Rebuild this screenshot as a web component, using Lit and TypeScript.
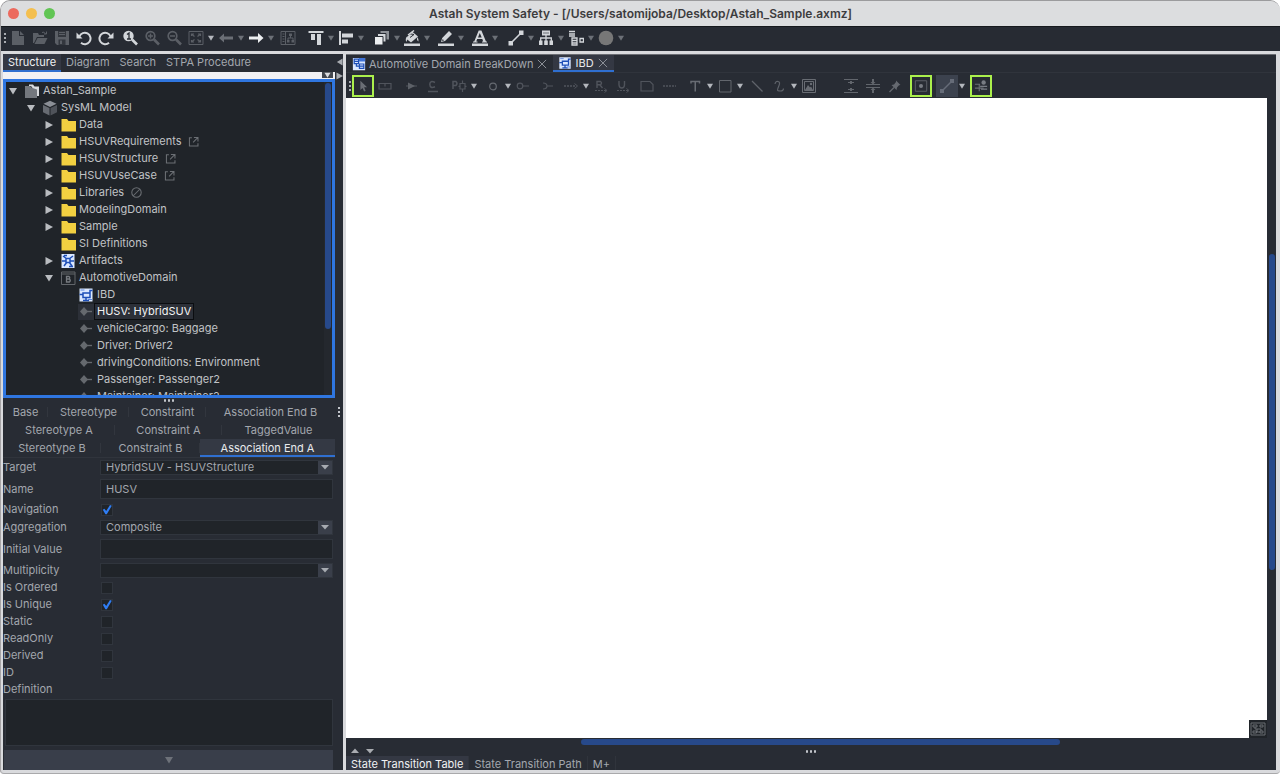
import { LitElement, html, css, svg, nothing, TemplateResult } from "lit";
import { customElement, property } from "lit/decorators.js";
import { classMap } from "lit/directives/class-map.js";

const L = "#d3d6da";
const D = "#5b5f66";
const G = "#50545c";

const art: Record<string, TemplateResult> = {
  file: svg`<path d="M2 1h7v5h5v9H2z" fill=${D}/><path d="M10 1l4 4h-4z" fill=${D}/>`,
  open: svg`<path d="M1 13V3h5l1 2h5v2H5l-3 6z" fill=${D}/><path d="M5.500 8H15.500l-3 6H2.500z" fill=${D}/><path d="M10 2.500q2-1.500 3.500 1.500M12 4h2.500V1.500" fill="none" stroke=${D}/>`,
  save: svg`<path d="M1 1h14v14H3l-2-2z" fill=${D}/><path d="M4 1h8v6H4z" fill="#33373e"/><path d="M5 2.500h6M5 4.500h6" stroke=${D}/><path d="M4.500 9.500h7v5.500h-7z" fill="#33373e"/><path d="M6 10.500h2v3.500H6z" fill=${D}/>`,
  undo: svg`<path d="M3.500 6.500A5.700 5.700 0 1 1 5 12.700" fill="none" stroke=${L} stroke-width="2"/><path d="M0.500 2.500v6h6z" fill=${L}/>`,
  redo: svg`<path d="M12.500 6.500A5.700 5.700 0 1 0 11 12.700" fill="none" stroke=${L} stroke-width="2"/><path d="M15.500 2.500v6h-6z" fill=${L}/>`,
  zoom1: svg`<circle cx="6.500" cy="6" r="5.200" fill=${L}/><path d="M10 9.500l5 5" stroke=${L} stroke-width="2.600"/><path d="M5 4.500l2-1.500v6M5 9h4" fill="none" stroke="#282c34" stroke-width="1.300"/>`,
  zoomIn: svg`<circle cx="6.500" cy="6" r="4.300" fill="none" stroke=${D} stroke-width="1.700"/><path d="M10 9.500l5 5" stroke=${D} stroke-width="2.600"/><path d="M4 6h5M6.500 3.500v5" stroke=${D} stroke-width="1.500"/>`,
  zoomOut: svg`<circle cx="6.500" cy="6" r="4.300" fill="none" stroke=${D} stroke-width="1.700"/><path d="M10 9.500l5 5" stroke=${D} stroke-width="2.600"/><path d="M4 6h5" stroke=${D} stroke-width="1.500"/>`,
  fit: svg`<path d="M1 1.500h14v13H1z" fill="none" stroke=${D}/><path d="M3.500 6V4H6M10 4h2.500v2M12.500 10v2H10M6 12H3.500v-2M4 4.500l2.500 2M12 4.500l-2.500 2M4 11.500l2.500-2M12 11.500l-2.500-2" fill="none" stroke=${D} stroke-width="1.200"/>`,
  left: svg`<path d="M1 8l5-4.500v3h9v3H6v3z" fill="#6a6e75"/>`,
  right: svg`<path d="M15.500 8l-5.500-5v3.500H1v3h9V13z" fill="#eceef0"/>`,
  table: svg`<path d="M1 1.500h14v13H1zM5.500 1.500v13" fill="none" stroke=${D}/><path d="M2.500 4h2M2.500 6.500h2M2.500 9h2M2.500 11.500h2" stroke=${D}/><path d="M9 3.500h3v2.500H9zM7 10h2.500v2.500H7zM11.500 10H14v2.500h-2.500z" fill=${D}/><path d="M10.500 6v2M8 10V8h5v2" fill="none" stroke=${D}/>`,
  alignTop: svg`<path d="M0.500 1h15v2h-15zM3 4h4v6H3zM9 4h4v11H9z" fill=${L}/>`,
  alignLeft: svg`<path d="M1 1h2v14H1zM4 3.500h11v4H4zM4 9.500h6v4H4z" fill=${L}/>`,
  layers: svg`<path d="M6.500 1H15v8.500H6.500z" fill="#8d9197"/><path d="M3.500 3.500H12V12H3.500z" fill=${L} stroke="#282c34"/><path d="M0.500 6.500H9V15H0.500z" fill="#eceef0" stroke="#282c34"/>`,
  bucket: svg`<path d="M0 13.500h16V16H0z" fill=${L}/><path d="M8 1.500l6 5-7 6-5-4z" fill=${L}/><path d="M4 3.500l6 1M6 7.500l4-3" stroke="#282c34"/><path d="M4 5l6-4.500" stroke=${L} stroke-width="1.400"/><path d="M3.500 6Q0.500 9 2.500 12 4 9.500 3.500 6z" fill=${L}/><path d="M13 7q2 2 1.500 4.500-2-1-1.500-4.500z" fill=${L}/>`,
  pencil: svg`<path d="M0 13.500h16V16H0z" fill=${L}/><path d="M3 12l1.200-4L11 1l3 3-7 7zM4 11l2-.5-1.300-1.500z" fill=${L} fill-rule="evenodd"/>`,
  letter: svg`<path d="M0 13.500h16V16H0z" fill=${L}/><path d="M6.700 0.500h2.700L14 11.500h1v1h-5v-1h1.200L10.300 9H5.200l-1 2.500h1.300v1H1v-1h1.200zM7.800 3L6 7.500h3.700z" fill=${L} fill-rule="evenodd"/>`,
  line: svg`<path d="M2.500 13.500l11-11" stroke=${L} stroke-width="1.600"/><path d="M0.500 11H5v4.500H.5zM11 .5h4.500V5H11z" fill=${L}/>`,
  hier: svg`<path d="M4 0.500h8v5H4zM1 10.500h3.500V15H1zM6.200 10.500h3.600V15H6.200zM11.500 10.500H15V15h-3.500z" fill=${L}/><path d="M8 5v6M2.700 11V8h10.600v3" fill="none" stroke=${L} stroke-width="1.300"/><path d="M5 3h6" stroke="#6a6e75"/>`,
  boxes: svg`<path d="M1 1.500h6M1 4h6M1 6h6M4 8h5v7H4zM4 10.500h5M4 13h5M12 8.500h3.500V12H12z" fill="none" stroke=${L} stroke-width="1.300"/>`,
  ball: svg`<circle cx="8" cy="8" r="7.300" fill="#777"/>`,

  cursor: svg`<path d="M5 2v10.500l2.500-2.300 1.700 4 1.800-.8-1.700-3.900h3.400z" fill="#6a6e75"/>`,
  part: svg`<path d="M2 5.500h12V11H2zM8 5.500v3" fill="none" stroke=${G} stroke-width="1.200"/>`,
  flow: svg`<path d="M3 8h11" stroke=${G}/><path d="M5 4.500L12 8l-7 3.500z" fill="#5d6168"/>`,
  constraint: svg`<path d="M3 13.500h10" stroke=${G} stroke-width="1.500"/><path d="M10 4.500Q5 2 4.800 6.300 5 11 10 8.800" fill="none" stroke=${G} stroke-width="1.500"/>`,
  port: svg`<path d="M2 11V3.500h3q2 2-0 4H2" fill="none" stroke=${G} stroke-width="1.500"/><path d="M9 5.500h5V11H9zM11.500 2.500v3M11.500 11v3M7.500 8.300h1.500M14 8.300h1.500" fill="none" stroke=${G} stroke-width="1.200"/>`,
  ring: svg`<circle cx="8" cy="8.500" r="3.300" fill="none" stroke="#656970" stroke-width="1.200"/>`,
  provided: svg`<circle cx="5" cy="8" r="2.800" fill="none" stroke=${G} stroke-width="1.200"/><path d="M8 8h6" stroke=${G} stroke-width="1.200"/>`,
  required: svg`<path d="M4 5q4 0 4 3t-4 3M8 8h6" fill="none" stroke=${G} stroke-width="1.200"/>`,
  dashed: svg`<path d="M1 8h12" stroke=${G} stroke-width="1.300" stroke-dasharray="2 1"/><path d="M11.500 5.500L14.500 8l-3 2.500" fill="none" stroke=${G}/>`,
  realize: svg`<path d="M4 10V3.500h3.500q2 1.500 0 3.300H4M7 7l2.500 3" fill="none" stroke=${G} stroke-width="1.400"/><path d="M2 12.500h11" stroke=${G} stroke-dasharray="2 1"/><path d="M11.500 10.500l2.500 2-2.500 2" fill="none" stroke=${G}/>`,
  usage: svg`<path d="M4 3v4q.3 3 2.800 3T9.500 7V3" fill="none" stroke=${G} stroke-width="1.400"/><path d="M2 12.500h11" stroke=${G} stroke-dasharray="2 1"/><path d="M11.500 10.500l2.500 2-2.500 2" fill="none" stroke=${G}/>`,
  note: svg`<path d="M2 3.500h9l3 3V13H2z" fill="none" stroke=${G} stroke-width="1.200"/>`,
  anchor: svg`<path d="M2 8h13" stroke=${G} stroke-width="1.300" stroke-dasharray="2 1"/>`,
  text: svg`<path d="M4 5.500V3.500h8.500v2M8.250 3.500v10" fill="none" stroke="#686c73" stroke-width="1.500"/>`,
  box: svg`<path d="M2.500 2.500h11.500v11.500H2.500z" fill="none" stroke="#62666d"/>`,
  stroke: svg`<path d="M3 3l10.500 10.500" stroke="#5f636a" stroke-width="1.200"/>`,
  curve: svg`<path d="M4 6Q4.500 3 7 3.500T8 7.500 6.500 12 9.500 13 12.500 10.500" fill="none" stroke="#5f636a" stroke-width="1.200"/>`,
  image: svg`<path d="M1.500 1.500h13v13h-13zM3.500 3.500h9v9h-9z" fill="none" stroke="#686c73"/><path d="M4 12l3-5 2 2.500 1-1 2 3.500z" fill="#686c73"/><circle cx="10" cy="6" r="1.200" fill="#686c73"/>`,
  spread: svg`<path d="M1 1.500h14M1 14.500h14M5 4.500h6M5 11.500h6" stroke="#62666d"/><path d="M8 3v3M8 10v3" stroke="#62666d" stroke-width="2"/>`,
  squeeze: svg`<path d="M1 6.500h14M1 9.500h14" stroke="#62666d"/><path d="M8 1v3M8 12v3" stroke="#62666d" stroke-width="2"/><path d="M5.500 4h5L8 6.500zM5.500 12h5L8 9.500z" fill="#62666d"/>`,
  pin: svg`<path d="M9 2.500l4.500 4.500-1.500.3L10 9.500l-.5 2.500L4.500 7 7 6.500 9 4z" fill="#656970"/><path d="M7 9.500L2.500 14" stroke="#656970" stroke-width="1.300"/>`,
  center: svg`<path d="M1.500 2h13v12h-13z" fill="none" stroke="#62666d"/><circle cx="8" cy="8" r="2.300" fill="#787c83"/>`,
  link: svg`<path d="M3 13L13 3" stroke="#666c78" stroke-width="1.500"/><path d="M1 11h4v4H1zM11 1h4v4h-4z" fill="#666c78"/>`,
  rake: svg`<path d="M1 6h6M1 10.500h10M6 6v8" stroke="#686c73" stroke-width="1.300" fill="none"/><circle cx="11" cy="4" r="2.500" fill="#787c83"/><path d="M7 8.500h8M8 11.500h7" stroke="#787c83" stroke-width="1.500"/>`,

  project: svg`<path d="M1 3h5l2 2h5v10H1z" fill="#74787e"/><path d="M5 1.500h4l1.500 2H15V13h-2V6.500L8.500 5 7 3H5z" fill="#d9dbde"/>`,
  model: svg`<path d="M8 .8l6.500 3L8 7 1.500 3.800z" fill="#8b8f96"/><path d="M1 5l6.500 3v7.500L1 12.200z" fill="#676b72"/><path d="M15 5L8.500 8v7.500l6.500-3.300z" fill="#4f535a"/>`,
  folder: svg`<path d="M1.500 2H7l1.500 2H16v10.500H1.500z" fill="#f2d041"/>`,
  artifact: svg`<path d="M1.500 1h13v14h-13z" fill="#dbe8ff"/><path d="M3 3l4 3M13 3L9 6M4 13l3-4M12 13L9 9M2 8h4M10 8h4M6 5.500h4v4H6zM4 2.500h3M9 13.500h4" stroke="#1e4fb8" stroke-width="1.500" fill="none"/>`,
  block: svg`<path d="M1.500 2h13.500v12.500H1.500zM1.500 4h13.500" fill="none" stroke="#62666b"/><path d="M6.500 6.500h2.500q1.500 1 0 2.500H6.500zM6.500 9h3q1.500 1.500 0 3h-3zM6.500 6.500V12" fill="none" stroke="#777b80" stroke-width="1.300"/>`,
  ibd: svg`<path d="M1.500 1.500h13v13h-13z" fill="#dbe8ff"/><path d="M5 6h7v4.500H5zM1.500 7.500H5M12 6V3.500h2.500M8 10.500V13M5 13.500h6" fill="none" stroke="#1e4fb8" stroke-width="1.500"/><path d="M2.500 3h4M10 12.500h4" stroke="#5b86dd"/>`,
  bdd: svg`<path d="M1 1h14v14H1z" fill="#dbe8ff"/><path d="M2.500 2.500h5v5h-5zM8.500 8h5v5h-5zM2.500 5h5M8.500 10.500h5M5 7.500v3h3.500" fill="none" stroke="#1e4fb8" stroke-width="1.400"/><path d="M8 1h7v4H8z" fill="#3f73d8"/>`,
  attr: svg`<path d="M6 3l4 4.500L6 12 2 7.500z" fill="#65696e"/><path d="M9 7.500h5" stroke="#65696e" stroke-width="1.400"/>`,
  external: svg`<path d="M6 3.500H3v10h10.500V10M8.500 3H13.500v5M13.500 3L7.500 9" fill="none" stroke="#6b6f74" stroke-width="1.300"/>`,
  banned: svg`<circle cx="8" cy="8" r="5.800" fill="none" stroke="#6b6f74" stroke-width="1.300"/><path d="M4 12L12 4" stroke="#6b6f74" stroke-width="1.300"/>`,
  close: svg`<path d="M2.500 2.500l11 11M13.500 2.500l-11 11" stroke="#8d9198" stroke-width="1.300"/>`,
  map: svg`<path d="M1 2h14v12H1z" fill="none" stroke="#686c73"/><path d="M3 4h4v2H3zM10 4h3v2h-3zM3 10h3.500v2H3zM10 10h3v2h-3zM5 6v2h6v2M7 8v3h3" fill="none" stroke="#686c73"/>`,
};

const icon = (name: string) =>
  html`<svg class="icon" viewBox="0 0 16 16" aria-hidden="true">${art[name]}</svg>`;

const down = html`<svg class="tri" viewBox="0 0 8 8" aria-hidden="true"><path d="M0 1h8L4 7.500z" fill="currentColor"/></svg>`;
const flatDown = html`<svg class="tri" viewBox="0 0 8 8" aria-hidden="true"><path d="M0 2h8L4 6.500z" fill="currentColor"/></svg>`;
const flatUp = html`<svg class="tri" viewBox="0 0 8 8" aria-hidden="true"><path d="M0 6h8L4 1.500z" fill="currentColor"/></svg>`;
const rightTri = html`<svg class="tri" viewBox="0 0 8 8" aria-hidden="true"><path d="M0.500 0v8L8 4z" fill="currentColor"/></svg>`;
const leftTri = html`<svg class="tri" viewBox="0 0 8 8" aria-hidden="true"><path d="M7.500 0v8L1 4z" fill="currentColor"/></svg>`;

const base = css`
  * { box-sizing: border-box; }
  button {
    appearance: none; border: 0; padding: 0; margin: 0; background: none;
    font: inherit; color: inherit; display: flex; align-items: center; justify-content: center;
  }
  .icon { width: 16px; height: 16px; display: block; flex: none; }
  .tri { width: 8px; height: 8px; display: block; flex: none; }
`;

/* Tool entries: an icon name, "v" for a menu arrow, or a number for a gap. */
type Tool = string | number;

const mainTools: Tool[] = [
  "file", "open", "save", "undo", "redo", 2, "zoom1", "zoomIn", "zoomOut", "fit", "v", "left", "v", "right", "v",
  2, "table", 6, "alignTop", "v", "alignLeft", "v", 6, "layers", "v", "bucket", "v", 4, "pencil", "v",
  4, "letter", "v", 6, "line", "v", "hier", "v", "boxes", "v", "ball", "v",
];
const diagramTools: Tool[] = [
  "cursor", "part", 4, "flow", "constraint", 4, "port", "v", 4, "ring", "v", "provided", 2, "required", 2,
  "dashed", "v", "realize", "usage", 2, "note", "anchor", 4, "text", "v", "box", "v", 2, "stroke", "curve", "v",
  "image", 20, "spread", "squeeze", "pin", 4, "center", 4, "link", "v", 4, "rake",
];

@customElement("tool-strip")
class ToolStrip extends LitElement {
  @property({ attribute: false }) tools: Tool[] = [];
  @property({ attribute: false }) framed: string[] = [];
  @property() lit = "";
  static styles = [base, css`
    :host { display: flex; align-items: center; overflow: hidden; }
    .grip { width: 4px; height: 14px; flex: none; background: radial-gradient(circle, #a9acb1 1px, transparent 1px) center / 4px 4px; }
    .tool { width: 22px; height: 22px; flex: none; }
    .framed { border: 2px solid #abf04c; }
    .framed .icon { width: 14px; height: 14px; }
    .pressed { background: #3c424e; }
    .menu { width: 8px; height: 22px; flex: none; color: #6c7077; }
    .menu .tri { width: 6px; height: 6px; }
    .menu.bright { color: #b4b7bd; }
    .g2 { width: 2px; flex: none; }
    .g4 { width: 4px; flex: none; }
    .g6 { width: 6px; flex: none; }
    .g20 { width: 20px; flex: none; }
  `];
  render() {
    const diagram = this.framed.length > 0;
    return html`<span class="grip"></span>
      ${this.tools.map((t, i) =>
        typeof t === "number"
          ? html`<span class="g${t}"></span>`
          : t === "v"
            ? html`<button class=${classMap({ menu: true, bright: diagram || this.tools[i - 1] === "fit" })} aria-label="menu">${down}</button>`
            : html`<button class=${classMap({ tool: true, framed: this.framed.includes(t), pressed: t === this.lit })} aria-label=${t}>${icon(t)}</button>`)}`;
  }
}

interface Row { level: number; icon: string; label: string; open?: boolean; mark?: string; selected?: boolean }
const rows: Row[] = [
  { level: 0, icon: "project", label: "Astah_Sample", open: true },
  { level: 1, icon: "model", label: "SysML Model", open: true },
  { level: 2, icon: "folder", label: "Data", open: false },
  { level: 2, icon: "folder", label: "HSUVRequirements", open: false, mark: "external" },
  { level: 2, icon: "folder", label: "HSUVStructure", open: false, mark: "external" },
  { level: 2, icon: "folder", label: "HSUVUseCase", open: false, mark: "external" },
  { level: 2, icon: "folder", label: "Libraries", open: false, mark: "banned" },
  { level: 2, icon: "folder", label: "ModelingDomain", open: false },
  { level: 2, icon: "folder", label: "Sample", open: false },
  { level: 2, icon: "folder", label: "SI Definitions" },
  { level: 2, icon: "artifact", label: "Artifacts", open: false },
  { level: 2, icon: "block", label: "AutomotiveDomain", open: true },
  { level: 3, icon: "ibd", label: "IBD" },
  { level: 3, icon: "attr", label: "HUSV: HybridSUV", selected: true },
  { level: 3, icon: "attr", label: "vehicleCargo: Baggage" },
  { level: 3, icon: "attr", label: "Driver: Driver2" },
  { level: 3, icon: "attr", label: "drivingConditions: Environment" },
  { level: 3, icon: "attr", label: "Passenger: Passenger2" },
  { level: 3, icon: "attr", label: "Maintainer: Maintainer2" },
];

@customElement("model-tree")
class ModelTree extends LitElement {
  static styles = [base, css`
    :host { display: flex; border: 3px solid #2f76e0; background: #202429; color: #c0c3c6; overflow: hidden; }
    .rows { flex: 1; min-width: 0; overflow: hidden; margin: 0; padding: 0; list-style: none; }
    .row { display: flex; align-items: center; height: 17px; }
    .l1 { padding-left: 18px; }
    .l2 { padding-left: 36px; }
    .l3 { padding-left: 54px; }
    .toggle { width: 14px; height: 17px; flex: none; margin-right: 4px; color: #b9bcc0; }
    .label { padding: 0 2px; line-height: 15px; border: 1px solid transparent; white-space: nowrap; }
    .selected .label { color: #f2f3f4; border-color: #0b0d10; background: #2c3038; }
    .selected .icon { background: #2c3038; }
    .mark { margin-left: 3px; }
    .mark .icon { width: 13px; height: 13px; }
    .track { width: 8px; flex: none; padding: 1px; background: #24282e; }
    .thumb { height: 79%; border-radius: 3px; background: #27498a; }
  `];
  render() {
    return html`<ul class="rows" role="tree">${rows.map(r => html`
      <li class="row l${r.level} ${r.selected ? "selected" : ""}" role="treeitem">
        ${r.open === undefined ? html`<span class="toggle"></span>` : html`<button class="toggle" aria-label="toggle">${r.open ? down : rightTri}</button>`}
        ${icon(r.icon)}<span class="label">${r.label}</span>
        ${r.mark ? html`<span class="mark">${icon(r.mark)}</span>` : nothing}
      </li>`)}</ul>
      <div class="track"><div class="thumb"></div></div>`;
  }
}

interface Field { id: string; label: string; kind: "select" | "text" | "check"; value?: string; checked?: boolean }
const fields: Field[] = [
  { id: "target", label: "Target", kind: "select", value: "HybridSUV - HSUVStructure" },
  { id: "name", label: "Name", kind: "text", value: "HUSV" },
  { id: "navigation", label: "Navigation", kind: "check", checked: true },
  { id: "aggregation", label: "Aggregation", kind: "select", value: "Composite" },
  { id: "initial", label: "Initial Value", kind: "text", value: "" },
  { id: "multiplicity", label: "Multiplicity", kind: "select", value: "" },
  { id: "ordered", label: "Is Ordered", kind: "check" },
  { id: "unique", label: "Is Unique", kind: "check", checked: true },
  { id: "static", label: "Static", kind: "check" },
  { id: "readonly", label: "ReadOnly", kind: "check" },
  { id: "derived", label: "Derived", kind: "check" },
  { id: "id", label: "ID", kind: "check" },
];

@customElement("property-pane")
class PropertyPane extends LitElement {
  static styles = [base, css`
    :host { display: flex; flex-direction: column; min-height: 0; }
    .tabs { display: grid; height: 18px; flex: none; }
    .four { grid-template-columns: 45fr 81fr 77fr 129fr; }
    .three { grid-template-columns: 112fr 107fr 113fr; }
    .last { grid-template-columns: 98fr 99fr 135fr; }
    .tab { white-space: nowrap; overflow: hidden; background: linear-gradient(#32363e, #32363e) right center / 1px 10px no-repeat; }
    .tab:last-child { background: none; }
    .tab.active { background: #343944; color: #e8eaed; border-bottom: 2px solid #2f6fd0; padding-top: 2px; }
    .form { display: flex; flex-direction: column; border-top: 1px solid #30343c; flex: 1; min-height: 0; }
    .field { display: grid; grid-template-columns: 97px 1fr; align-items: center; flex: none; padding-right: 2px; }
    .select { height: 18px; }
    .text { height: 25px; }
    .check, .caption { height: 17px; line-height: 17px; flex: none; }
    .combo { display: flex; height: 15px; border: 1px solid #30353d; background: #202429; }
    select, input, textarea { appearance: none; margin: 0; font: inherit; color: inherit; border-radius: 0; outline: 0; }
    select { flex: 1; min-width: 0; border: 0; padding: 0 0 0 5px; height: 13px; line-height: 13px; background: none; }
    .drop { width: 14px; display: flex; align-items: center; justify-content: center; background: #3a3f4a; color: #a7abb1; pointer-events: none; }
    .entry { width: 100%; height: 20px; padding: 0 5px; border: 1px solid #30353d; background: #202429; }
    .tick { width: 12px; height: 12px; margin-left: 1px; border: 1px solid #30353d; background: #202429; display: block; }
    .tick:checked::before {
      content: ""; display: block; width: 10px; height: 10px; background: #2f7df4;
      clip-path: polygon(8% 52%, 24% 42%, 42% 66%, 80% 4%, 98% 12%, 48% 98%, 34% 98%);
    }
    .definition { display: block; resize: none; flex: 1; min-height: 24px; margin: 1px 2px 4px 2px; border: 1px solid #30353d; background: #202429; }
    .more { height: 20px; flex: none; margin: 0 2px 0 1px; background: #393e4a; color: #6d7179; }
  `];
  private control(f: Field) {
    if (f.kind === "select")
      return html`<div class="combo"><select id=${f.id}><option>${f.value}</option></select><span class="drop">${flatDown}</span></div>`;
    if (f.kind === "text") return html`<input class="entry" id=${f.id} type="text" .value=${f.value ?? ""}>`;
    return html`<input class="tick" id=${f.id} type="checkbox" .checked=${!!f.checked}>`;
  }
  render() {
    const row = (cls: string, names: string[], active = "") => html`<div class="tabs ${cls}">${names.map(n =>
      html`<button class="tab ${n === active ? "active" : ""}">${n}</button>`)}</div>`;
    return html`
      ${row("four", ["Base", "Stereotype", "Constraint", "Association End B"])}
      ${row("three", ["Stereotype A", "Constraint A", "TaggedValue"])}
      ${row("last", ["Stereotype B", "Constraint B", "Association End A"], "Association End A")}
      <div class="form">
        ${fields.map(f => html`<div class="field ${f.kind}"><label for=${f.id}>${f.label}</label>${this.control(f)}</div>`)}
        <label class="caption" for="definition">Definition</label>
        <textarea class="definition" id="definition"></textarea>
        <button class="more" aria-label="more">${down}</button>
      </div>`;
  }
}

@customElement("app-root")
class AppRoot extends LitElement {
  static styles = [base, css`
    :host {
      display: flex; flex-direction: column; height: 100vh; overflow: hidden; background: #d9dadd;
      border-top: 1px solid #9b9b9d; border-bottom: 1px solid #a9a9ab; border-left: 1px solid #a5a3a5; border-radius: 10px 10px 4px 4px;
      box-sizing: border-box; font: 11px/14px Inter, "Liberation Sans", sans-serif; color: #a3a7ae;
    }
    .title { display: grid; grid-template-columns: 1fr auto 1fr; align-items: center; height: 25px; flex: none; background: #dcdddf; padding: 0 7px; color: #3c3c3e; }
    .lights { display: flex; gap: 7px; }
    .light { width: 11px; height: 11px; border-radius: 50%; }
    .red { background: #ec6a5e; }
    .amber { background: #f4bf4f; }
    .green { background: #61c554; }
    h1 { margin: 0; font-size: 12px; font-weight: 600; line-height: 16px; white-space: nowrap; }
    .main-tools { height: 25px; flex: none; padding: 0 0 2px 2px; background: #272b33; border-top: 1px solid #16191d; }
    .body { flex: 1; min-height: 0; display: grid; grid-template-columns: 340px 1fr; gap: 3px; padding: 3px 4px 3px 2px; }
    .side { display: grid; grid-template-columns: 1fr 8px; background: #282c34; min-height: 0; }
    .left { display: flex; flex-direction: column; min-width: 0; min-height: 0; }
    .tabs { display: flex; height: 18px; flex: none; }
    .tab { padding: 0 5px 2px; white-space: nowrap; }
    .tab.on { color: #f0f1f3; background: #343843; border-bottom: 2px solid #2f6fd0; padding-bottom: 0; }
    .strip { height: 7px; flex: none; background: #f1f1f4; display: flex; justify-content: flex-end; padding-right: 2px; }
    .fold { width: 11px; height: 6px; background: #43474e; color: #dcdde0; }
    .fold .tri { width: 7px; height: 6px; }
    model-tree { height: 319px; flex: none; }
    .split { height: 5px; flex: none; color: #b9bcc1; }
    .dots { width: 12px; height: 3px; background: radial-gradient(circle, #c2c5ca 1px, transparent 1.500px) center / 4px 3px; }
    property-pane { flex: 1; }
    .gutter { display: flex; flex-direction: column; align-items: center; padding-top: 4px; gap: 6px; color: #a9acb1; }
    .gutter .tri { width: 7px; height: 8px; }
    .kebab { margin-top: 320px; width: 4px; height: 12px; background: radial-gradient(circle, #c2c5ca 1px, transparent 1.500px) center / 4px 4px; }
    .work { display: flex; flex-direction: column; background: #282c34; min-width: 0; min-height: 0; border-top: 1px solid #6a6c72; }
    .docs { display: flex; height: 18px; flex: none; border-bottom: 1px solid #30343c; padding-left: 1px; }
    .doc { display: flex; align-items: center; gap: 3px; padding: 0 5px; white-space: nowrap; }
    .doc .icon { width: 14px; height: 14px; }
    .doc.on { color: #e8eaed; background: #343843; border-bottom: 2px solid #2f6fd0; }
    .doc .shut .icon { width: 12px; height: 12px; }
    .diagram-tools { height: 25px; flex: none; padding-left: 2px; }
    .view { flex: 1; min-height: 0; display: grid; grid-template-columns: 1fr 9px; grid-template-rows: 1fr 8px; }
    .canvas { background: #fff; display: flex; align-items: flex-end; justify-content: flex-end; }
    .map { width: 18px; height: 18px; background: #202429; }
    .vtrack { display: flex; flex-direction: column; align-items: center; }
    .vbefore { height: 24.400%; flex: none; }
    .vthumb { width: 6px; height: 49.400%; border-radius: 3px; background: #27498a; }
    .htrack { display: flex; align-items: center; }
    .hbefore { width: 25.500%; flex: none; }
    .hthumb { width: 52%; height: 6px; border-radius: 3px; background: #27498a; }
    .bar { display: grid; grid-template-columns: 1fr auto 1fr; align-items: center; height: 10px; flex: none; color: #a9acb1; }
    .pair { display: flex; gap: 7px; padding: 0 0 0 5px; }
    .foot { display: flex; height: 14px; flex: none; }
    .foot .tab { height: 14px; line-height: 12px; padding: 2px 5px 0; border-right: 1px solid #30343c; }
    .foot .tab.on { border-bottom: 0; }
  `];
  render() {
    return html`
      <header class="title">
        <div class="lights"><span class="light red"></span><span class="light amber"></span><span class="light green"></span></div>
        <h1>Astah System Safety - [/Users/satomijoba/Desktop/Astah_Sample.axmz]</h1>
      </header>
      <tool-strip class="main-tools" .tools=${mainTools}></tool-strip>
      <div class="body">
        <aside class="side">
          <div class="left">
            <nav class="tabs">
              <button class="tab on">Structure</button><button class="tab">Diagram</button>
              <button class="tab">Search</button><button class="tab">STPA Procedure</button>
            </nav>
            <div class="strip"><button class="fold" aria-label="options">${down}</button></div>
            <model-tree></model-tree>
            <button class="split" aria-label="resize"><span class="dots"></span></button>
            <property-pane></property-pane>
          </div>
          <div class="gutter">${leftTri}${rightTri}<span class="kebab"></span></div>
        </aside>
        <main class="work">
          <nav class="docs">
            <div class="doc">${icon("bdd")}<span>Automotive Domain BreakDown</span><button class="shut" aria-label="close">${icon("close")}</button></div>
            <div class="doc on">${icon("ibd")}<span>IBD</span><button class="shut" aria-label="close">${icon("close")}</button></div>
          </nav>
          <tool-strip class="diagram-tools" .tools=${diagramTools} .framed=${["cursor", "center", "rake"]} lit="link"></tool-strip>
          <div class="view">
            <div class="canvas"><button class="map" aria-label="map">${icon("map")}</button></div>
            <div class="vtrack"><div class="vbefore"></div><div class="vthumb"></div></div>
            <div class="htrack"><div class="hbefore"></div><div class="hthumb"></div></div>
          </div>
          <div class="bar"><div class="pair">${flatUp}${flatDown}</div><span class="dots"></span></div>
          <nav class="foot">
            <button class="tab on">State Transition Table</button><button class="tab">State Transition Path</button><button class="tab">M+</button>
          </nav>
        </main>
      </div>`;
  }
}
